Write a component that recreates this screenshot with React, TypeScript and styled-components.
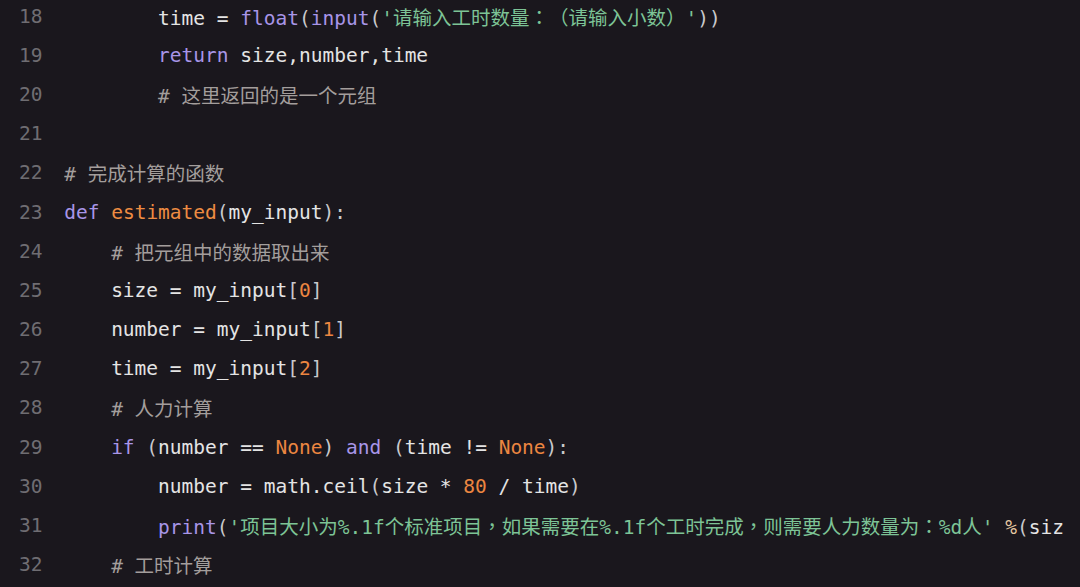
import React from "react";
import styled, { createGlobalStyle } from "styled-components";

const Global = createGlobalStyle`
  html, body { margin: 0; padding: 0; background: #1a171d; }
  body { overflow: hidden; }
`;

type Kind = "t" | "kw" | "fn" | "num" | "str" | "cm" | "p" | "op";

const colors: Record<Kind, string> = {
  t: "#e4e4e4",
  kw: "#a895e8",
  fn: "#ee8c42",
  num: "#ec8641",
  str: "#7dc496",
  cm: "#a39e9c",
  p: "#c9c9cc",
  op: "#e6c8a2",
};

type Tok = [Kind, string];

const lines: { n: number; indent: number; toks: Tok[] }[] = [
  {
    n: 18,
    indent: 8,
    toks: [
      ["t", "time = "],
      ["kw", "float"],
      ["p", "("],
      ["kw", "input"],
      ["p", "("],
      ["str", "'请输入工时数量：（请输入小数）'"],
      ["p", "))"],
    ],
  },
  { n: 19, indent: 8, toks: [["kw", "return"], ["t", " size,number,time"]] },
  { n: 20, indent: 8, toks: [["cm", "# 这里返回的是一个元组"]] },
  { n: 21, indent: 0, toks: [] },
  { n: 22, indent: 0, toks: [["cm", "# 完成计算的函数"]] },
  {
    n: 23,
    indent: 0,
    toks: [
      ["kw", "def"],
      ["t", " "],
      ["fn", "estimated"],
      ["p", "("],
      ["t", "my_input"],
      ["p", "):"],
    ],
  },
  { n: 24, indent: 4, toks: [["cm", "# 把元组中的数据取出来"]] },
  { n: 25, indent: 4, toks: [["t", "size = my_input"], ["p", "["], ["num", "0"], ["p", "]"]] },
  { n: 26, indent: 4, toks: [["t", "number = my_input"], ["p", "["], ["num", "1"], ["p", "]"]] },
  { n: 27, indent: 4, toks: [["t", "time = my_input"], ["p", "["], ["num", "2"], ["p", "]"]] },
  { n: 28, indent: 4, toks: [["cm", "# 人力计算"]] },
  {
    n: 29,
    indent: 4,
    toks: [
      ["kw", "if"],
      ["t", " "],
      ["p", "("],
      ["t", "number == "],
      ["num", "None"],
      ["p", ")"],
      ["t", " "],
      ["kw", "and"],
      ["t", " "],
      ["p", "("],
      ["t", "time != "],
      ["num", "None"],
      ["p", "):"],
    ],
  },
  {
    n: 30,
    indent: 8,
    toks: [
      ["t", "number = math.ceil"],
      ["p", "("],
      ["t", "size * "],
      ["num", "80"],
      ["t", " / time"],
      ["p", ")"],
    ],
  },
  {
    n: 31,
    indent: 8,
    toks: [
      ["kw", "print"],
      ["p", "("],
      ["str", "'项目大小为%.1f个标准项目，如果需要在%.1f个工时完成，则需要人力数量为：%d人'"],
      ["t", " "],
      ["op", "%"],
      ["p", "("],
      ["t", "siz"],
    ],
  },
  { n: 32, indent: 4, toks: [["cm", "# 工时计算"]] },
];

const Editor = styled.div`
  width: 1080px;
  height: 587px;
  overflow: hidden;
  background: #1a171d;
  font-family: "DejaVu Sans Mono", "Noto Sans CJK SC", monospace;
  font-size: 19.5px;
  color: #e4e4e4;
  text-spacing-trim: space-all;
  font-kerning: none;
`;

const Lines = styled.div`
  display: flex;
  flex-direction: column;
  margin-top: -3.5px;
`;

const Row = styled.div`
  display: flex;
  align-items: center;
  height: 39.2px;
  white-space: pre;
`;

const LineNo = styled.span`
  flex: none;
  width: 2.4ch;
  padding-left: 19px;
  margin-right: 17px;
  color: #6f6d72;
`;

const Code = styled.span<{ $indent: number }>`
  flex: 1;
  min-width: 0;
  overflow: hidden;
  margin-right: 15px;
  padding-left: ${(p) => p.$indent}ch;
`;

const Tk = styled.span<{ $k: Kind }>`
  color: ${(p) => colors[p.$k]};
`;

const Punct = styled.span`
  font-family: "Noto Sans CJK TC", "Noto Sans CJK SC", sans-serif;
  display: inline-block;
  width: 1em;
  text-align: center;
`;

function renderText(text: string) {
  const parts = text.split(/([：，（）])/);
  return parts.map((s, i) =>
    /^[：，（）]$/.test(s) ? <Punct key={i}>{s}</Punct> : s
  );
}

export default function App() {
  return (
    <>
      <Global />
      <Editor>
        <Lines>
          {lines.map((l) => (
            <Row key={l.n}>
              <LineNo>{l.n}</LineNo>
              <Code $indent={l.indent}>
                {l.toks.map((t, i) => (
                  <Tk key={i} $k={t[0]}>
                    {renderText(t[1])}
                  </Tk>
                ))}
              </Code>
            </Row>
          ))}
        </Lines>
      </Editor>
    </>
  );
}
